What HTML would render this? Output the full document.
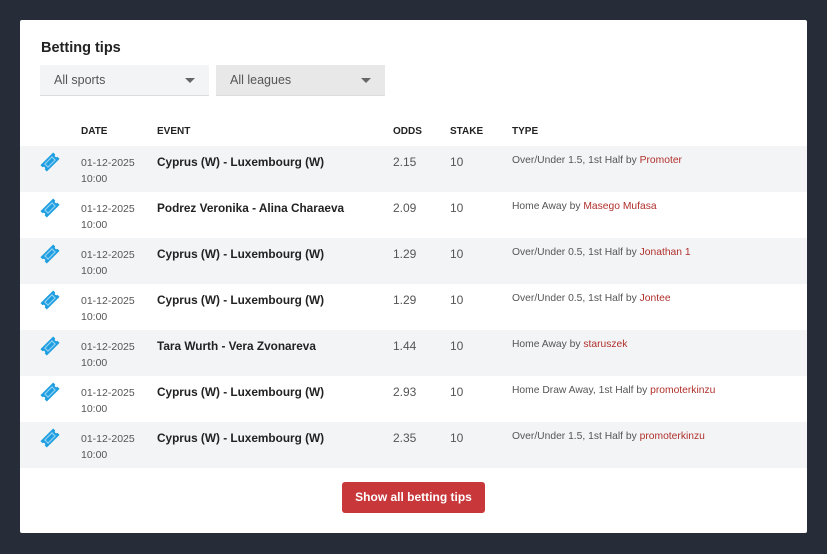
<!DOCTYPE html>
<html><head><meta charset="utf-8"><style>
body{margin:0;width:827px;height:554px;background:#262c38;font-family:"Liberation Sans",sans-serif;overflow:hidden;position:relative}
.card{position:absolute;left:20px;top:20px;width:787px;height:513px;background:#fff;border-radius:2px}
h2{position:absolute;left:21px;top:20px;margin:0;font-size:14.5px;font-weight:bold;color:#222}
.sel{position:absolute;top:45px;height:31px;border-bottom:1px solid #ddd;font-size:12.5px;color:#555;line-height:31px;padding-left:14px;box-sizing:border-box}
.sel:after{content:"";position:absolute;right:14px;top:13px;border:5px solid transparent;border-top:5px solid #666;border-bottom:0}
.th{position:absolute;top:106px;font-size:10px;font-weight:bold;color:#222}
.row{position:absolute;left:0;width:787px;height:46px}
.row.g{background:#f3f4f6}
.row div{position:absolute;top:9px;font-size:12px;color:#555}
.d{left:61px;font-size:10.5px!important;line-height:16px}
.e{left:137px;font-weight:bold;color:#222!important;font-size:11.8px!important}
.o{left:373px}.s{left:430px}
.t{left:492px;font-size:10.3px!important}
.t span{color:#b0302c}
.ic{left:20px;top:6px!important}
.btn{position:absolute;left:322px;top:462px;width:143px;height:31px;background:#c8373a;border-radius:3px;color:#fff;font-size:12px;font-weight:bold;text-align:center;line-height:31px}
</style></head><body>
<div class="card">
<h2>Betting tips</h2>
<div class="sel" style="left:20px;width:169px;background:#f3f4f6">All sports</div>
<div class="sel" style="left:196px;width:169px;background:#e8e8e8">All leagues</div>
<div class="th" style="left:61px">DATE</div>
<div class="th" style="left:137px">EVENT</div>
<div class="th" style="left:373px">ODDS</div>
<div class="th" style="left:430px">STAKE</div>
<div class="th" style="left:492px">TYPE</div>

<div class="row g" style="top:126px"><div class="ic"><svg width="20" height="20" viewBox="0 0 20 20"><g transform="rotate(-45 10 10)"><path d="M1 5.5h18v3a1.5 1.5 0 0 0 0 3v3H1v-3a1.5 1.5 0 0 0 0-3z" fill="#1e9ee0"/><rect x="5" y="7.8" width="10" height="4.4" fill="none" stroke="#8fd0f2" stroke-width="1.2"/></g></svg></div><div class="d">01-12-2025<br>10:00</div><div class="e">Cyprus (W) - Luxembourg (W)</div><div class="o">2.15</div><div class="s">10</div><div class="t">Over/Under 1.5, 1st Half by <span>Promoter</span></div></div>

<div class="row" style="top:172px"><div class="ic"><svg width="20" height="20" viewBox="0 0 20 20"><g transform="rotate(-45 10 10)"><path d="M1 5.5h18v3a1.5 1.5 0 0 0 0 3v3H1v-3a1.5 1.5 0 0 0 0-3z" fill="#1e9ee0"/><rect x="5" y="7.8" width="10" height="4.4" fill="none" stroke="#8fd0f2" stroke-width="1.2"/></g></svg></div><div class="d">01-12-2025<br>10:00</div><div class="e">Podrez Veronika - Alina Charaeva</div><div class="o">2.09</div><div class="s">10</div><div class="t">Home Away by <span>Masego Mufasa</span></div></div>

<div class="row g" style="top:218px"><div class="ic"><svg width="20" height="20" viewBox="0 0 20 20"><g transform="rotate(-45 10 10)"><path d="M1 5.5h18v3a1.5 1.5 0 0 0 0 3v3H1v-3a1.5 1.5 0 0 0 0-3z" fill="#1e9ee0"/><rect x="5" y="7.8" width="10" height="4.4" fill="none" stroke="#8fd0f2" stroke-width="1.2"/></g></svg></div><div class="d">01-12-2025<br>10:00</div><div class="e">Cyprus (W) - Luxembourg (W)</div><div class="o">1.29</div><div class="s">10</div><div class="t">Over/Under 0.5, 1st Half by <span>Jonathan 1</span></div></div>

<div class="row" style="top:264px"><div class="ic"><svg width="20" height="20" viewBox="0 0 20 20"><g transform="rotate(-45 10 10)"><path d="M1 5.5h18v3a1.5 1.5 0 0 0 0 3v3H1v-3a1.5 1.5 0 0 0 0-3z" fill="#1e9ee0"/><rect x="5" y="7.8" width="10" height="4.4" fill="none" stroke="#8fd0f2" stroke-width="1.2"/></g></svg></div><div class="d">01-12-2025<br>10:00</div><div class="e">Cyprus (W) - Luxembourg (W)</div><div class="o">1.29</div><div class="s">10</div><div class="t">Over/Under 0.5, 1st Half by <span>Jontee</span></div></div>

<div class="row g" style="top:310px"><div class="ic"><svg width="20" height="20" viewBox="0 0 20 20"><g transform="rotate(-45 10 10)"><path d="M1 5.5h18v3a1.5 1.5 0 0 0 0 3v3H1v-3a1.5 1.5 0 0 0 0-3z" fill="#1e9ee0"/><rect x="5" y="7.8" width="10" height="4.4" fill="none" stroke="#8fd0f2" stroke-width="1.2"/></g></svg></div><div class="d">01-12-2025<br>10:00</div><div class="e">Tara Wurth - Vera Zvonareva</div><div class="o">1.44</div><div class="s">10</div><div class="t">Home Away by <span>staruszek</span></div></div>

<div class="row" style="top:356px"><div class="ic"><svg width="20" height="20" viewBox="0 0 20 20"><g transform="rotate(-45 10 10)"><path d="M1 5.5h18v3a1.5 1.5 0 0 0 0 3v3H1v-3a1.5 1.5 0 0 0 0-3z" fill="#1e9ee0"/><rect x="5" y="7.8" width="10" height="4.4" fill="none" stroke="#8fd0f2" stroke-width="1.2"/></g></svg></div><div class="d">01-12-2025<br>10:00</div><div class="e">Cyprus (W) - Luxembourg (W)</div><div class="o">2.93</div><div class="s">10</div><div class="t">Home Draw Away, 1st Half by <span>promoterkinzu</span></div></div>

<div class="row g" style="top:402px"><div class="ic"><svg width="20" height="20" viewBox="0 0 20 20"><g transform="rotate(-45 10 10)"><path d="M1 5.5h18v3a1.5 1.5 0 0 0 0 3v3H1v-3a1.5 1.5 0 0 0 0-3z" fill="#1e9ee0"/><rect x="5" y="7.8" width="10" height="4.4" fill="none" stroke="#8fd0f2" stroke-width="1.2"/></g></svg></div><div class="d">01-12-2025<br>10:00</div><div class="e">Cyprus (W) - Luxembourg (W)</div><div class="o">2.35</div><div class="s">10</div><div class="t">Over/Under 1.5, 1st Half by <span>promoterkinzu</span></div></div>

<div class="btn">Show all betting tips</div>
</div>
</body></html>
